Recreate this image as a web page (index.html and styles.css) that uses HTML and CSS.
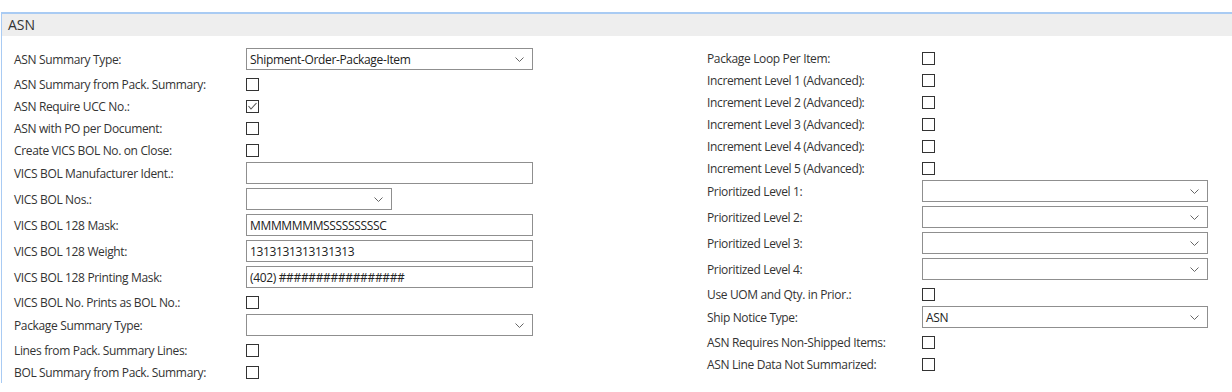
FILE: index.html
```html
<!DOCTYPE html>
<html lang="en">
<head>
    <meta charset="UTF-8">
    <title>ASN Setup</title>
    <link rel="stylesheet" href="styles.css">
</head>
<body>
    <div class="panel">
        <div class="panel-header">ASN</div>

        <div class="panel-body">
            <!-- left column -->
            <div class="column left">
                <div class="row ctl">
                    <label>ASN Summary Type:</label>
                    <div class="select wide"><span>Shipment-Order-Package-Item</span><svg class="chev" width="9" height="5" viewBox="0 0 9 5"><polyline points="0.5,0.5 4.5,4.5 8.5,0.5"/></svg></div>
                </div>
                <div class="row chk">
                    <label>ASN Summary from Pack. Summary:</label>
                    <span class="box"></span>
                </div>
                <div class="row chk">
                    <label>ASN Require UCC No.:</label>
                    <span class="box"><svg width="11" height="11" viewBox="0 0 11 11"><polyline points="1.5,5 4,8 9.5,2"/></svg></span>
                </div>
                <div class="row chk">
                    <label>ASN with PO per Document:</label>
                    <span class="box"></span>
                </div>
                <div class="row chk">
                    <label>Create VICS BOL No. on Close:</label>
                    <span class="box"></span>
                </div>
                <div class="row ctl">
                    <label>VICS BOL Manufacturer Ident.:</label>
                    <input class="text wide" type="text" value="">
                </div>
                <div class="row ctl">
                    <label>VICS BOL Nos.:</label>
                    <div class="select short"><span></span><svg class="chev" width="9" height="5" viewBox="0 0 9 5"><polyline points="0.5,0.5 4.5,4.5 8.5,0.5"/></svg></div>
                </div>
                <div class="row ctl">
                    <label>VICS BOL 128 Mask:</label>
                    <input class="text wide" type="text" value="MMMMMMMSSSSSSSSSC">
                </div>
                <div class="row ctl">
                    <label>VICS BOL 128 Weight:</label>
                    <input class="text wide" type="text" value="1313131313131313">
                </div>
                <div class="row ctl">
                    <label>VICS BOL 128 Printing Mask:</label>
                    <input class="text wide" type="text" value="(402) #################">
                </div>
                <div class="row chk">
                    <label>VICS BOL No. Prints as BOL No.:</label>
                    <span class="box"></span>
                </div>
                <div class="row ctl">
                    <label>Package Summary Type:</label>
                    <div class="select wide"><span></span><svg class="chev" width="9" height="5" viewBox="0 0 9 5"><polyline points="0.5,0.5 4.5,4.5 8.5,0.5"/></svg></div>
                </div>
                <div class="row chk">
                    <label>Lines from Pack. Summary Lines:</label>
                    <span class="box"></span>
                </div>
                <div class="row chk">
                    <label>BOL Summary from Pack. Summary:</label>
                    <span class="box"></span>
                </div>
            </div>

            <!-- right column -->
            <div class="column right">
                <div class="row chk">
                    <label>Package Loop Per Item:</label>
                    <span class="box"></span>
                </div>
                <div class="row chk">
                    <label>Increment Level 1 (Advanced):</label>
                    <span class="box"></span>
                </div>
                <div class="row chk">
                    <label>Increment Level 2 (Advanced):</label>
                    <span class="box"></span>
                </div>
                <div class="row chk">
                    <label>Increment Level 3 (Advanced):</label>
                    <span class="box"></span>
                </div>
                <div class="row chk">
                    <label>Increment Level 4 (Advanced):</label>
                    <span class="box"></span>
                </div>
                <div class="row chk">
                    <label>Increment Level 5 (Advanced):</label>
                    <span class="box"></span>
                </div>
                <div class="row ctl">
                    <label>Prioritized Level 1:</label>
                    <div class="select wide"><span></span><svg class="chev" width="9" height="5" viewBox="0 0 9 5"><polyline points="0.5,0.5 4.5,4.5 8.5,0.5"/></svg></div>
                </div>
                <div class="row ctl">
                    <label>Prioritized Level 2:</label>
                    <div class="select wide"><span></span><svg class="chev" width="9" height="5" viewBox="0 0 9 5"><polyline points="0.5,0.5 4.5,4.5 8.5,0.5"/></svg></div>
                </div>
                <div class="row ctl">
                    <label>Prioritized Level 3:</label>
                    <div class="select wide"><span></span><svg class="chev" width="9" height="5" viewBox="0 0 9 5"><polyline points="0.5,0.5 4.5,4.5 8.5,0.5"/></svg></div>
                </div>
                <div class="row ctl">
                    <label>Prioritized Level 4:</label>
                    <div class="select wide"><span></span><svg class="chev" width="9" height="5" viewBox="0 0 9 5"><polyline points="0.5,0.5 4.5,4.5 8.5,0.5"/></svg></div>
                </div>
                <div class="row chk">
                    <label>Use UOM and Qty. in Prior.:</label>
                    <span class="box"></span>
                </div>
                <div class="row ctl">
                    <label>Ship Notice Type:</label>
                    <div class="select wide"><span>ASN</span><svg class="chev" width="9" height="5" viewBox="0 0 9 5"><polyline points="0.5,0.5 4.5,4.5 8.5,0.5"/></svg></div>
                </div>
                <div class="row chk">
                    <label>ASN Requires Non-Shipped Items:</label>
                    <span class="box"></span>
                </div>
                <div class="row chk">
                    <label>ASN Line Data Not Summarized:</label>
                    <span class="box"></span>
                </div>
            </div>
        </div>
    </div>
</body>
</html>
```

FILE: styles.css
```css
body {
    margin: 0;
    background-color: #fff;
    font-family: "Open Sans", "Noto Sans", Arial, sans-serif;
    color: #333;
}
.panel {
    margin: 12px 0 0 1px;
    border-top: 2px solid #a9cbf3;
    border-left: 1px solid #a9cbf3;
}
.panel-header {
    height: 22px;
    line-height: 22px;
    padding-left: 6px;
    background-color: #eeeeee;
    font-size: 14px;
}
.panel-body {
    display: grid;
    grid-template-columns: 693px 501px;
    padding: 11px 0 0 12px;
}
.row {
    display: flex;
    align-items: center;
    font-size: 12px;
    letter-spacing: -0.35px;
}
.row.chk {
    height: 22px;
}
.row.ctl {
    box-sizing: border-box;
    height: 26px;
    padding-bottom: 2px; /* control sits 1px above the row centre */
}
.left label {
    width: 232px;
    flex: none;
}
.right label {
    width: 215px;
    flex: none;
}
.box {
    width: 11px;
    height: 11px;
    border: 1px solid #333;
    display: flex;
    align-items: center;
    justify-content: center;
}
.box svg polyline {
    fill: none;
    stroke: #555;
    stroke-width: 1.1;
}
.select, .text {
    box-sizing: border-box;
    height: 22px;
    border: 1px solid #8f8f8f;
    background: #fff;
}
.select {
    display: flex;
    align-items: center;
    justify-content: space-between;
    padding: 0 8px 0 3px;
    color: #222;
}
.chev polyline {
    fill: none;
    stroke: #666;
    stroke-width: 1;
}
.text {
    padding: 0 3px;
    font-family: inherit;
    font-size: 12px;
    letter-spacing: -0.35px;
    color: #222;
    outline: none;
}
.wide {
    width: 287px;
}
.short {
    width: 146px;
}
```
